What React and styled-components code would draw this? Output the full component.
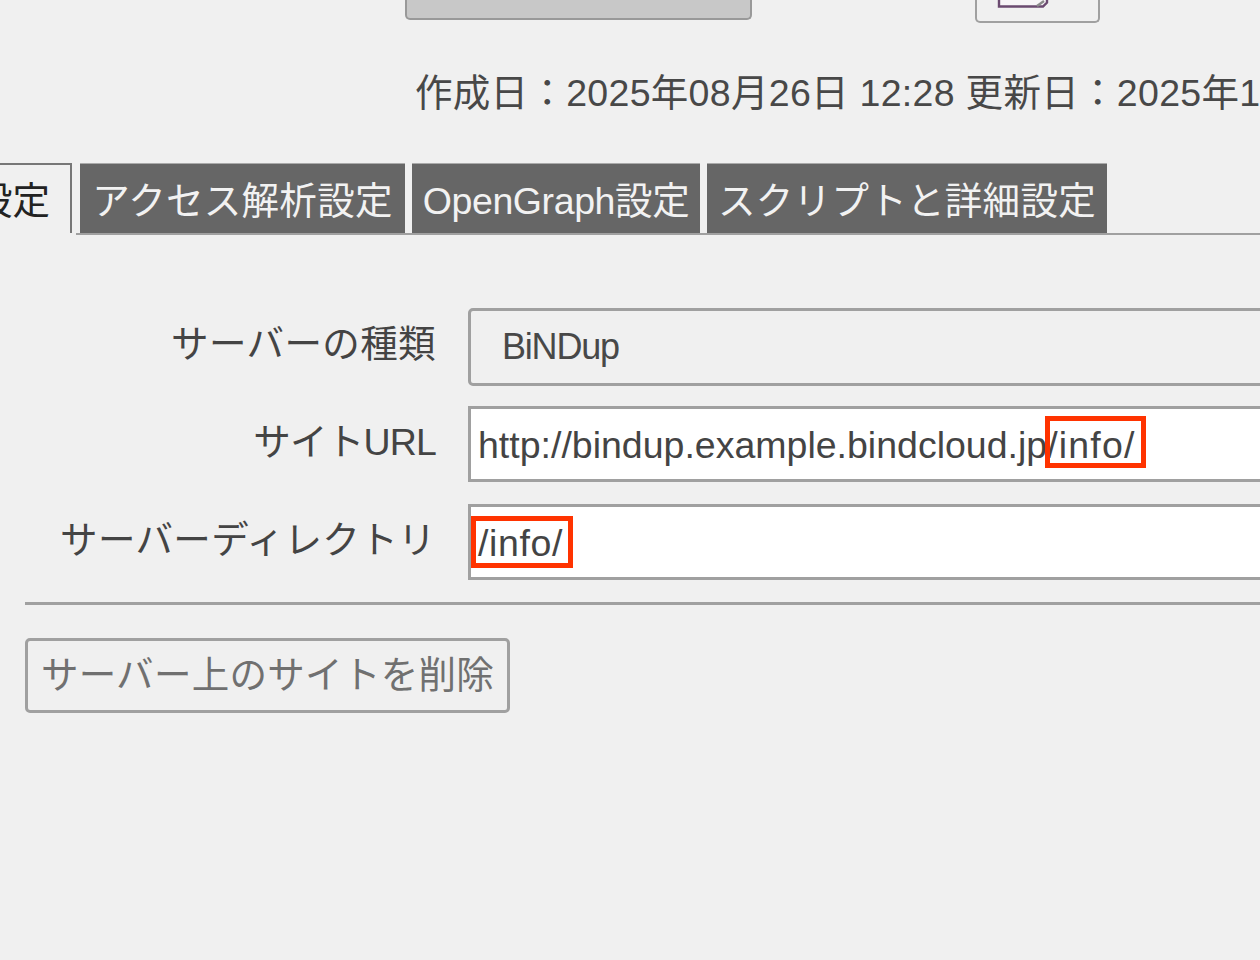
import styled, { createGlobalStyle } from 'styled-components';

const GlobalStyle = createGlobalStyle`
    html, body {
        margin: 0;
        padding: 0;
        background: #f0f0f0;
        overflow: hidden;
    }
    body {
        font-family: "Liberation Sans", "Noto Sans CJK JP", sans-serif;
        color: #444;
    }
`;

const tabs = [
    { label: 'アクセス解析設定', width: 325, spacing: 0.3 },
    { label: 'OpenGraph設定', width: 288, spacing: -0.4 },
    { label: 'スクリプトと詳細設定', width: 400, spacing: 0.3 },
];

const EditIcon = () => (
    <svg width="52" height="9" viewBox="0 0 52 9" aria-hidden="true">
        <path d="M2 0v6.5h44l4-4V0" fill="#f7f5f7" stroke="#6b4a70" strokeWidth="2.4" />
        <path d="M40 6l7-5" stroke="#8b8b8b" strokeWidth="2.4" fill="none" />
    </svg>
);

const App = () => {
    return (
        <Page>
            <GlobalStyle />
            <TopBar>
                <SaveButton />
                <IconButton><EditIcon /></IconButton>
            </TopBar>
            <Dates>作成日：2025年08月26日 12:28 更新日：2025年1</Dates>
            <TabBar>
                <ActiveTab>設定</ActiveTab>
                <TabGroup>
                    {tabs.map((tab) => (
                        <Tab key={tab.label} $width={tab.width} $spacing={tab.spacing}>{tab.label}</Tab>
                    ))}
                </TabGroup>
            </TabBar>
            <Form>
                <Label>サーバーの種類</Label>
                <SelectField>BiNDup</SelectField>
                <Label $spacing={-0.8}>サイトURL</Label>
                <TextField>http://bindup.example.bindcloud.jp<Marked $left={-2} $lift={3} $spacing={1.2}>/info/</Marked></TextField>
                <Label>サーバーディレクトリ</Label>
                <TextField><Marked $left={-7} $lift={1} $spacing={0.6}>/info/</Marked></TextField>
            </Form>
            <Divider />
            <DeleteButton>サーバー上のサイトを削除</DeleteButton>
        </Page>
    );
};

const Page = styled.div`
    width: 1260px;
    height: 960px;
    overflow: hidden;
`;

const TopBar = styled.div`
    display: flex;
    align-items: flex-start;
    padding-left: 405px;
    height: 23px;
`;

const SaveButton = styled.div`
    width: 347px;
    height: 20px;
    box-sizing: border-box;
    background: #c8c8c8;
    border: 2px solid #999;
    border-top: 0;
    border-radius: 0 0 5px 5px;
`;

const IconButton = styled.div`
    width: 125px;
    height: 23px;
    box-sizing: border-box;
    margin-left: 223px;
    padding-left: 20px;
    border: 2px solid #a0a0a0;
    border-top: 0;
    border-radius: 0 0 5px 5px;
    line-height: 0;
`;

const Dates = styled.div`
    margin: 46px 0 0 415px;
    height: 48px;
    font-size: 37.5px;
    line-height: 48px;
    letter-spacing: 0.3px;
    color: #484848;
    white-space: nowrap;
`;

const TabBar = styled.div`
    display: flex;
    align-items: flex-start;
    margin-top: 46px;
    margin-left: -40px;
`;

const ActiveTab = styled.div`
    width: 112px;
    height: 70px;
    flex: none;
    box-sizing: border-box;
    padding-right: 20px;
    margin-right: 4px;
    background: #f0f0f0;
    border-top: 2px solid #777;
    border-right: 2px solid #777;
    font-size: 37.5px;
    line-height: 72px;
    color: #222;
    text-align: right;
    white-space: nowrap;
`;

const TabGroup = styled.div`
    display: flex;
    flex: 1;
    height: 70px;
    padding-left: 4px;
    border-bottom: 2px solid #a0a0a0;
`;

const Tab = styled.div`
    width: ${(props) => props.$width}px;
    height: 70px;
    flex: none;
    box-sizing: border-box;
    margin-right: 7px;
    background: #666;
    border-top: 1px solid #aaa;
    color: #f2f2f2;
    font-size: 37.5px;
    line-height: 74px;
    letter-spacing: ${(props) => props.$spacing}px;
    text-align: center;
    white-space: nowrap;
`;

const Form = styled.div`
    display: grid;
    grid-template-columns: 436px 900px;
    grid-auto-rows: 76px;
    column-gap: 32px;
    row-gap: 22px;
    margin-top: 73px;
`;

const Label = styled.div`
    display: flex;
    align-items: center;
    justify-content: flex-end;
    padding-bottom: 12px;
    font-size: 37.5px;
    letter-spacing: ${(props) => props.$spacing || 0.4}px;
    color: #444;
    white-space: nowrap;
`;

const SelectField = styled.div`
    height: 78px;
    box-sizing: border-box;
    padding-left: 31px;
    background: #f0f0f0;
    border: 3px solid #a0a0a0;
    border-radius: 5px;
    font-size: 36px;
    line-height: 72px;
    letter-spacing: -1.2px;
    color: #484848;
`;

const TextField = styled.div`
    box-sizing: border-box;
    padding-left: 7px;
    background: #fff;
    border: 3px solid #a0a0a0;
    font-size: 37.5px;
    line-height: 72px;
    color: #444;
    white-space: nowrap;
`;

const Marked = styled.span`
    position: relative;
    letter-spacing: ${(props) => props.$spacing}px;

    &::after {
        content: '';
        position: absolute;
        top: ${(props) => -5 - props.$lift}px;
        bottom: ${(props) => -5 + props.$lift}px;
        left: ${(props) => props.$left}px;
        right: -10px;
        border: 5px solid #ff3300;
        pointer-events: none;
    }
`;

const Divider = styled.hr`
    height: 3px;
    margin: 22px 0 0 25px;
    border: 0;
    background: #a0a0a0;
`;

const DeleteButton = styled.button`
    display: block;
    width: 485px;
    height: 75px;
    box-sizing: border-box;
    margin: 33px 0 0 25px;
    padding: 1px 0 0;
    background: #f0f0f0;
    border: 3px solid #a0a0a0;
    border-radius: 5px;
    font-family: inherit;
    font-size: 37.5px;
    letter-spacing: 0.3px;
    line-height: 1;
    color: #707070;
    white-space: nowrap;
`;

export default App;
